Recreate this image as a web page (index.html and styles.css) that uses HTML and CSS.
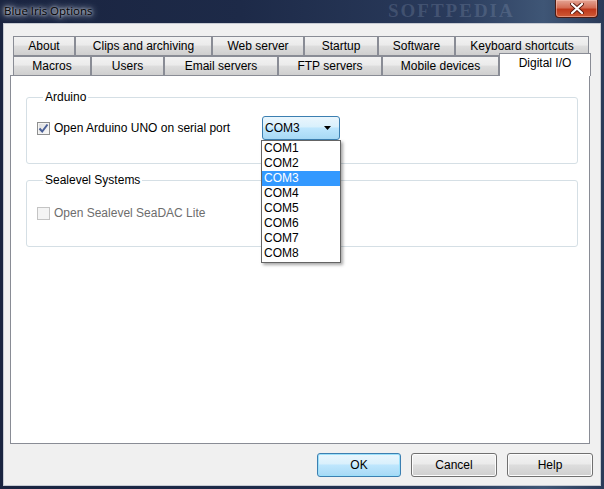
FILE: index.html
```html
<!DOCTYPE html>
<html>
<head>
    <meta charset="UTF-8">
    <title>Blue Iris Options</title>
    <link rel="stylesheet" href="styles.css">
</head>
<body>
    <div class="window">
        <div class="titlebar">
            <span class="title">Blue Iris Options</span>
            <span class="watermark">SOFTPEDIA</span>
            <button class="close-btn">
                <svg width="14" height="11" viewBox="0 0 14 11">
                    <path d="M2 1 L12 10 M12 1 L2 10" stroke="#5a1a10" stroke-width="4" stroke-linecap="round"/>
                    <path d="M2 1 L12 10 M12 1 L2 10" stroke="#ffffff" stroke-width="2.2" stroke-linecap="round"/>
                </svg>
            </button>
        </div>
        <div class="client">
            <div class="tabs">
                <ul class="tab-row">
                    <li class="tab" style="width: 62px">About</li>
                    <li class="tab" style="width: 137px">Clips and archiving</li>
                    <li class="tab" style="width: 92px">Web server</li>
                    <li class="tab" style="width: 74px">Startup</li>
                    <li class="tab" style="width: 77px">Software</li>
                    <li class="tab" style="width: 134px">Keyboard shortcuts</li>
                </ul>
                <ul class="tab-row tab-row-front">
                    <li class="tab" style="width: 78px">Macros</li>
                    <li class="tab" style="width: 73px">Users</li>
                    <li class="tab" style="width: 114px">Email servers</li>
                    <li class="tab" style="width: 104px">FTP servers</li>
                    <li class="tab" style="width: 117px">Mobile devices</li>
                    <li class="tab tab-active" style="width: 92px">Digital I/O</li>
                </ul>
            </div>
            <div class="panel">
                <fieldset class="group group-arduino">
                    <legend>Arduino</legend>
                    <div class="option-row">
                        <label class="check-label">
                            <span class="checkbox checked">
                                <svg width="11" height="11" viewBox="0 0 11 11">
                                    <path d="M1.5 5.5 L4.2 8.5 L9.5 1.5" fill="none" stroke="#4a5f97" stroke-width="2"/>
                                </svg>
                            </span>
                            Open Arduino UNO on serial port
                        </label>
                        <div class="combo-wrap">
                            <div class="combo">
                                <span>COM3</span>
                                <svg width="8" height="5" viewBox="0 0 8 5"><path d="M0 0 H7 L3.5 4 Z" fill="#000"/></svg>
                            </div>
                            <ul class="dropdown">
                                <li>COM1</li>
                                <li>COM2</li>
                                <li class="selected">COM3</li>
                                <li>COM4</li>
                                <li>COM5</li>
                                <li>COM6</li>
                                <li>COM7</li>
                                <li>COM8</li>
                            </ul>
                        </div>
                    </div>
                </fieldset>
                <fieldset class="group group-sealevel">
                    <legend>Sealevel Systems</legend>
                    <div class="option-row">
                        <label class="check-label disabled">
                            <span class="checkbox"></span>
                            Open Sealevel SeaDAC Lite
                        </label>
                    </div>
                </fieldset>
            </div>
            <div class="dialog-buttons">
                <button class="btn btn-default" style="width: 84px">OK</button>
                <button class="btn" style="width: 86px">Cancel</button>
                <button class="btn" style="width: 86px">Help</button>
            </div>
        </div>
    </div>
</body>
</html>
```

FILE: styles.css
```css
body {
    margin: 0;
    width: 604px;
    height: 489px;
    overflow: hidden;
    font-family: "Liberation Sans", Arial, sans-serif;
    font-size: 12px;
    background-color: #1b2641;
}

.window {
    width: 604px;
    height: 489px;
    background: linear-gradient(90deg, #1a2440 0%, #1d2a48 40%, #2a3b5c 75%, #3f5676 90%, #2a3a58 100%);
}

.titlebar {
    position: relative;
    height: 23px;
    display: flex;
    align-items: center;
}
.title {
    margin-left: 4px;
    margin-top: -3px;
    font-family: "Open Sans", "Noto Sans", sans-serif;
    font-size: 11.5px;
    color: #000;
    text-shadow: 0 0 3px #e2e6ee, 0 0 6px #c9d0dc, 0 0 9px #b8c2d2;
}
.watermark {
    position: absolute;
    left: 388px;
    top: 1px;
    font-family: "Liberation Serif", serif;
    font-size: 19px;
    line-height: 20px;
    font-weight: bold;
    letter-spacing: 2px;
    color: rgba(160, 175, 200, 0.22);
}
.close-btn {
    position: absolute;
    right: 6px;
    top: 0;
    width: 43px;
    height: 18px;
    padding: 0;
    border: 1px solid #4b1b14;
    border-top: none;
    border-radius: 0 0 4px 4px;
    background: linear-gradient(#e4a595 0%, #d46d55 45%, #c0391c 55%, #cf5a36 100%);
    box-shadow: inset 0 0 0 1px rgba(255, 210, 200, 0.45);
    display: flex;
    align-items: center;
    justify-content: center;
}

.client {
    margin: 0 3px 0 3px;
    height: 463px;
    box-sizing: border-box;
    background-color: #f0f0f0;
    border: 1px solid #c6cad2;
    padding: 12px 4px 0 6px;
}

.tabs {
    margin-left: 3px;
}
.tab-row {
    list-style: none;
    margin: 0;
    padding: 0;
    display: flex;
    height: 20px;
}
.tab-row-front {
    height: 19px;
    align-items: flex-end;
}
.tab {
    box-sizing: border-box;
    height: 20px;
    border: 1px solid #898c95;
    background: linear-gradient(#f2f2f2 0%, #ebebeb 45%, #dddddd 50%, #cfcfcf 100%);
    text-align: center;
    line-height: 18px;
    color: #000;
}
.tab-row-front .tab {
    height: 19px;
    border-bottom: none;
    line-height: 19px;
}
.tab-row-front .tab.tab-active {
    position: relative;
    z-index: 1;
    height: 23px;
    margin-bottom: -1px;
    background: #ffffff;
    line-height: 18px;
}

.panel {
    width: 580px;
    height: 369px;
    box-sizing: border-box;
    border: 1px solid #898c95;
    background-color: #ffffff;
    padding-top: 14px;
}

.group {
    margin: 0 11px 0 15px;
    padding: 0 10px;
    border: 1px solid #d5dfe5;
    border-radius: 3px;
}
.group legend {
    margin-left: 6px;
    padding: 0 2px;
    line-height: 14px;
    color: #000;
}
.group-arduino {
    padding-top: 12px;
    padding-bottom: 23px;
}
.group-sealevel {
    margin-top: 9px;
    padding-top: 14px;
    padding-bottom: 21px;
}

.option-row {
    display: flex;
    align-items: center;
    height: 24px;
}
.check-label {
    display: flex;
    align-items: center;
    gap: 4px;
    width: 225px;
    color: #000;
}
.check-label.disabled {
    color: #6d6d6d;
}
.checkbox {
    box-sizing: border-box;
    width: 13px;
    height: 13px;
    border: 1px solid #8e8f8f;
    background: linear-gradient(135deg, #dcdcdc, #fbfbfb);
    box-shadow: inset 0 0 0 1px #f4f4f4;
    display: flex;
    align-items: center;
    justify-content: center;
}
.disabled .checkbox {
    border-color: #c4c4c4;
    background: #f4f4f4;
}

.combo-wrap {
    position: relative;
}
.combo {
    box-sizing: border-box;
    width: 78px;
    height: 24px;
    border: 1px solid #3c7fb1;
    border-radius: 3px;
    background: linear-gradient(#eaf6fd 0%, #d9f0fc 45%, #bee6fd 50%, #a7d9f5 100%);
    display: flex;
    align-items: center;
    justify-content: space-between;
    padding: 0 7px 0 2px;
    color: #000;
}
.dropdown {
    position: absolute;
    left: -1px;
    top: 24px;
    width: 80px;
    box-sizing: border-box;
    list-style: none;
    margin: 0;
    padding: 0 0 1px 0;
    background: #ffffff;
    border: 1px solid #646464;
    box-shadow: 2px 2px 3px rgba(0, 0, 0, 0.35);
    z-index: 5;
}
.dropdown li {
    height: 15px;
    line-height: 15px;
    padding-left: 2px;
    color: #000;
}
.dropdown li.selected {
    background-color: #3399ff;
    color: #ffffff;
}

.dialog-buttons {
    display: flex;
    justify-content: flex-end;
    gap: 10px;
    margin-top: 9px;
    padding-right: 3px;
}
.btn {
    height: 24px;
    box-sizing: border-box;
    border: 1px solid #707070;
    border-radius: 3px;
    background: linear-gradient(#f2f2f2 0%, #ebebeb 45%, #dddddd 50%, #cfcfcf 100%);
    box-shadow: inset 0 0 0 1px #fcfcfc;
    font-family: "Liberation Sans", Arial, sans-serif;
    font-size: 12px;
    color: #000;
    padding: 0;
}
.btn-default {
    border-color: #3c7fb1;
    background: linear-gradient(#eaf6fd 0%, #d9f0fc 45%, #bee6fd 50%, #a7d9f5 100%);
    box-shadow: inset 0 0 0 1px #9ce0fa;
}
```
